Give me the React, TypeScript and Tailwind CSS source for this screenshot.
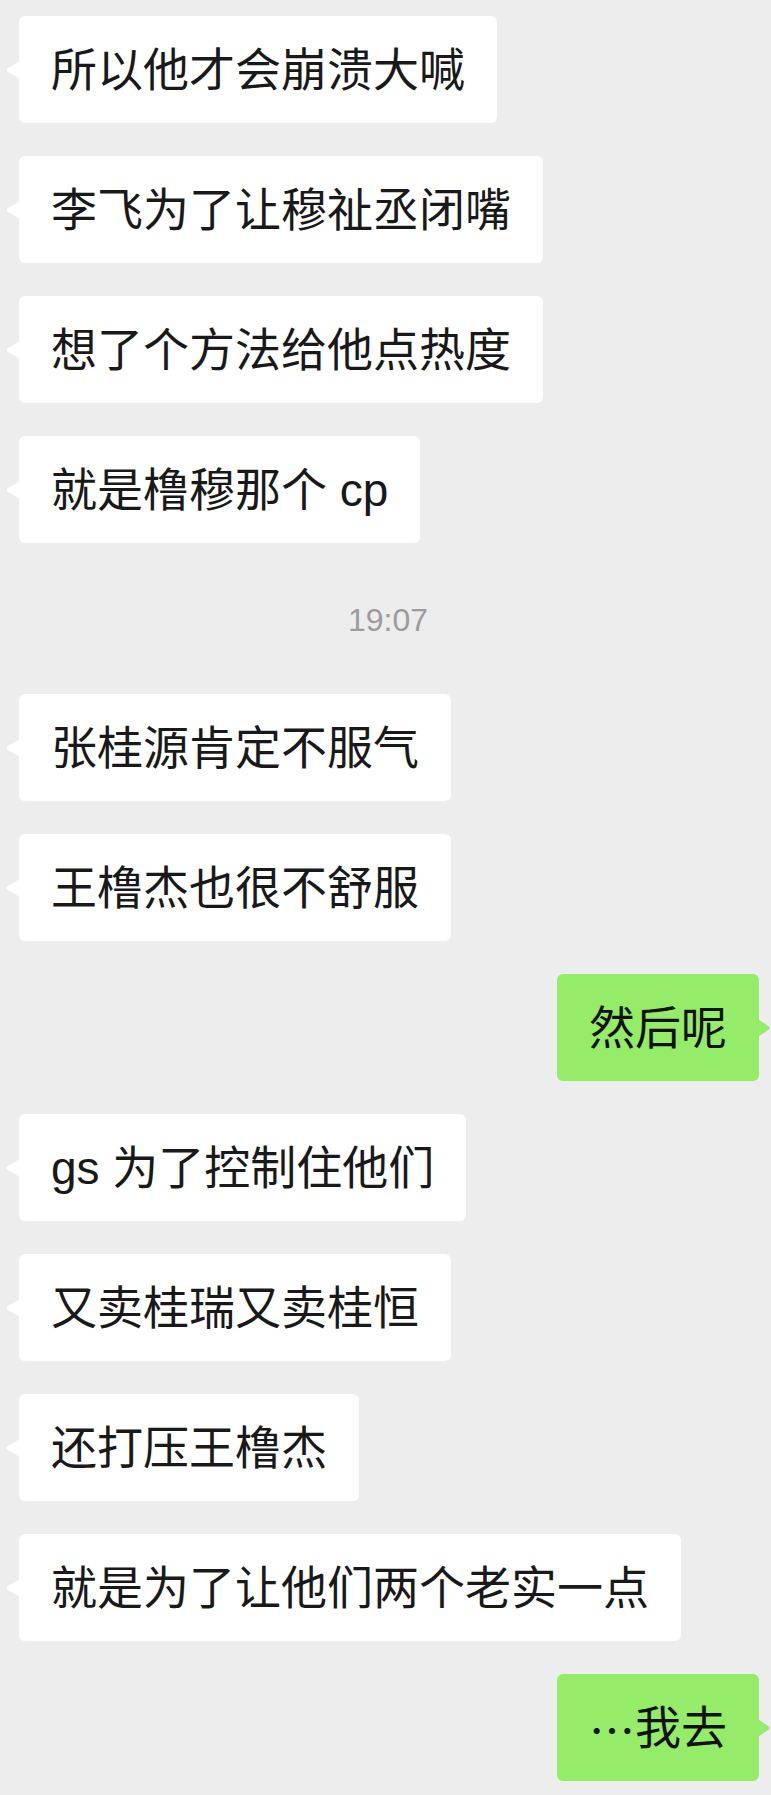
import React from "react";

type Msg =
  | { kind: "left"; text: React.ReactNode }
  | { kind: "right"; text: React.ReactNode }
  | { kind: "time"; text: string };

const FONT = {
  fontFamily: '"Liberation Sans", "Noto Sans CJK SC", sans-serif',
};

function LeftTail() {
  return (
    <svg
      className="absolute left-[-14px] top-1/2 -translate-y-1/2"
      width="15"
      height="20"
      viewBox="0 0 15 20"
    >
      <path d="M15 1 L2.2 8.6 Q0.8 10 2.2 11.4 L15 19 Z" fill="#ffffff" />
    </svg>
  );
}

function RightTail() {
  return (
    <svg
      className="absolute right-[-12px] top-1/2 -translate-y-1/2"
      width="13"
      height="20"
      viewBox="0 0 13 20"
    >
      <path d="M0 1 L10.8 8.6 Q12.2 10 10.8 11.4 L0 19 Z" fill="#95ec69" />
    </svg>
  );
}

const Ellipsis = () => (
  <span
    className="inline-block w-[46px] text-center"
    style={{ fontFamily: '"Noto Sans CJK SC", sans-serif' }}
  >
    …
  </span>
);

const messages: Msg[] = [
  { kind: "left", text: "所以他才会崩溃大喊" },
  { kind: "left", text: "李飞为了让穆祉丞闭嘴" },
  { kind: "left", text: "想了个方法给他点热度" },
  { kind: "left", text: "就是橹穆那个 cp" },
  { kind: "time", text: "19:07" },
  { kind: "left", text: "张桂源肯定不服气" },
  { kind: "left", text: "王橹杰也很不舒服" },
  { kind: "right", text: "然后呢" },
  { kind: "left", text: "gs 为了控制住他们" },
  { kind: "left", text: "又卖桂瑞又卖桂恒" },
  { kind: "left", text: "还打压王橹杰" },
  { kind: "left", text: "就是为了让他们两个老实一点" },
  {
    kind: "right",
    text: (
      <>
        <Ellipsis />
        我去
      </>
    ),
  },
];

export default function App() {
  return (
    <div
      className="w-full min-h-[1795px] bg-[#ededed] pt-[16px] flex flex-col gap-[33px]"
      style={FONT}
    >
      {messages.map((m, i) => {
        if (m.kind === "time") {
          return (
            <div
              key={i}
              className="h-[85px] flex items-center justify-center pl-[5px] pt-[3px] text-[32px] leading-none text-[#9c9c9c]"
            >
              {m.text}
            </div>
          );
        }
        if (m.kind === "left") {
          return (
            <div key={i} className="flex pl-[19px]">
              <div className="relative h-[107px] flex items-center px-[32px] bg-white rounded-[6px] text-[46px] leading-none text-[#191919] whitespace-nowrap">
                {m.text}
                <LeftTail />
              </div>
            </div>
          );
        }
        return (
          <div key={i} className="flex justify-end pr-[12px]">
            <div className="relative h-[107px] flex items-center px-[32px] bg-[#95ec69] rounded-[6px] text-[46px] leading-none text-[#111111] whitespace-nowrap">
              {m.text}
              <RightTail />
            </div>
          </div>
        );
      })}
    </div>
  );
}
